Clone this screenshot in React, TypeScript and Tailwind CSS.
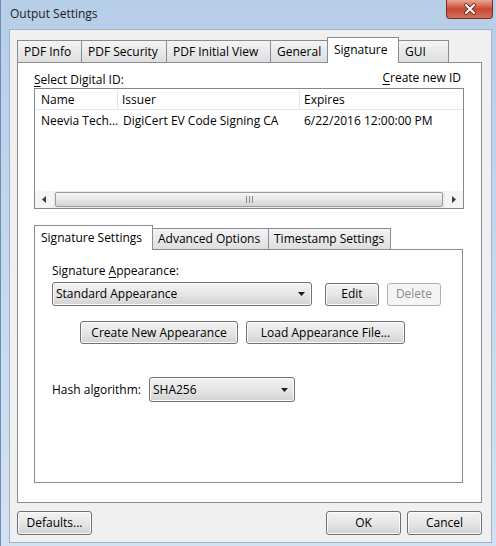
import type { ReactNode } from "react";

function Btn({
  children,
  className = "",
  disabled = false,
}: {
  children: ReactNode;
  className?: string;
  disabled?: boolean;
}) {
  return (
    <div
      className={`flex items-center justify-center rounded-[3px] border ${
        disabled
          ? "border-[#adb2b5] bg-[#f4f4f4] text-[#8d8d8d]"
          : "border-[#707070] bg-linear-to-b from-[#f3f3f3] from-0% via-[#e6e6e6] via-50% to-[#d2d2d2] to-100% text-black shadow-[inset_0_0_0_1px_#fbfbfb]"
      } ${className}`}
    >
      {children}
    </div>
  );
}

function Arrow() {
  return (
    <svg width="7" height="4" viewBox="0 0 7 4">
      <path d="M0 0 H7 L3.5 4 Z" fill="#1b1b1b" />
    </svg>
  );
}

function Combo({ value, className = "" }: { value: string; className?: string }) {
  return (
    <div
      className={`flex items-center justify-between rounded-[3px] border border-[#707070] bg-linear-to-b from-[#f3f3f3] from-0% via-[#e6e6e6] via-50% to-[#d2d2d2] to-100% pl-[3px] pr-[6px] shadow-[inset_0_0_0_1px_#fbfbfb] ${className}`}
    >
      <span>{value}</span>
      <Arrow />
    </div>
  );
}

export default function App() {
  const outerTabs = [
    { label: "PDF Info", w: "w-[65px]" },
    { label: "PDF Security", w: "w-[86px]" },
    { label: "PDF Initial View", w: "w-[105px]" },
    { label: "General", w: "w-[58px]" },
    { label: "Signature", w: "w-[72px]", active: true },
    { label: "GUI", w: "w-[51px]" },
  ];
  const innerTabs = [
    { label: "Signature Settings", w: "w-[119px]", active: true },
    { label: "Advanced Options", w: "w-[117px]" },
    { label: "Timestamp Settings", w: "w-[123px]" },
  ];

  return (
    <div className="flex h-[546px] w-[496px] flex-col border-l border-[#6f8db3] bg-linear-to-b from-[#b7cee8] to-[#d3e2f3] pr-[4px] pb-[3px] pl-[8px] font-['Open_Sans','Liberation_Sans',sans-serif] text-[12px] text-black">
      {/* title bar */}
      <div className="flex h-[29px] shrink-0 items-start justify-between">
        <span className="mt-[5px] pl-px text-[12px] text-[#1e1e1e]">Output Settings</span>
        <div className="mr-[-1px] flex h-[19px] w-[47px] items-center justify-center rounded-b-[4px] border border-t-0 border-[#7a2a1f] bg-linear-to-b from-[#e9a695] via-[#c8462f] to-[#d4705b]">
          <svg width="14" height="12" viewBox="0 0 14 12">
            <path d="M3 2 L11 10 M11 2 L3 10" stroke="#5a1a10" strokeWidth="3.6" strokeLinecap="round" />
            <path d="M3 2 L11 10 M11 2 L3 10" stroke="#ffffff" strokeWidth="2.2" strokeLinecap="round" />
          </svg>
        </div>
      </div>

      {/* client area */}
      <div className="flex flex-1 flex-col border border-[#9fb2ca] bg-[#f0f0f0] pt-[7px] pr-[9px] pl-[7px]">
        <div className="flex h-[25px] items-end">
          {outerTabs.map((t, i) =>
            t.active ? (
              <div
                key={t.label}
                className={`relative z-10 -mb-px -ml-px flex h-[26px] ${t.w} items-start border border-b-0 border-[#898c95] bg-white pt-[3px] pl-[6px]`}
              >
                {t.label}
              </div>
            ) : (
              <div
                key={t.label}
                className={`flex h-[22px] ${t.w} ${i > 0 ? "-ml-px" : ""} items-center border border-b-0 border-[#898c95] bg-linear-to-b from-[#f4f4f4] to-[#dedede] pl-[6px]`}
              >
                {t.label}
              </div>
            )
          )}
        </div>

        <div className="flex h-[441px] flex-col border border-[#898c95] bg-white pt-[6px] pr-[17px] pl-[16px]">
          <div className="flex h-[18px] items-start justify-between">
            <span className="pt-[2px]">
              <span className="underline underline-offset-2">S</span>elect Digital ID:
            </span>
            <span className="pr-[3px]">
              <span className="underline underline-offset-2">C</span>reate new ID
            </span>
          </div>

          {/* list */}
          <div className="mt-px flex h-[121px] flex-col border border-[#828790] bg-white">
            <div className="flex h-[21px] shrink-0 border-b border-[#e5e5e5] pt-px">
              <div className="flex w-[83px] items-center border-r border-[#e5e5e5] pl-[6px]">Name</div>
              <div className="flex w-[182px] items-center border-r border-[#e5e5e5] pl-[4px]">Issuer</div>
              <div className="flex flex-1 items-center pl-[4px]">Expires</div>
            </div>
            <div className="flex h-[21px] shrink-0 items-center whitespace-nowrap">
              <div className="w-[83px] overflow-hidden pl-[6px]">Neevia Tech...</div>
              <div className="w-[182px] overflow-hidden pl-[5px]">DigiCert EV Code Signing CA</div>
              <div className="flex-1 pl-[4px]">6/22/2016 12:00:00 PM</div>
            </div>
            <div className="flex-1" />
            <div className="flex h-[17px] shrink-0 items-center bg-[#ececec]">
              <div className="flex h-full w-[18px] items-center justify-center bg-[#f4f4f4]">
                <svg width="4" height="7" viewBox="0 0 4 7">
                  <path d="M4 0 V7 L0 3.5 Z" fill="#3a3a3a" />
                </svg>
              </div>
              <div className="mx-[2px] flex h-[15px] flex-1 items-center justify-center rounded-[2px] border border-[#9a9a9a] bg-linear-to-b from-[#f7f7f7] via-[#e6e6e6] to-[#d4d4d4]">
                <div className="flex gap-[2px]">
                  <div className="h-[7px] w-px bg-[#8a8a8a]" />
                  <div className="h-[7px] w-px bg-[#8a8a8a]" />
                  <div className="h-[7px] w-px bg-[#8a8a8a]" />
                </div>
              </div>
              <div className="flex h-full w-[18px] items-center justify-center bg-[#f4f4f4]">
                <svg width="4" height="7" viewBox="0 0 4 7">
                  <path d="M0 0 V7 L4 3.5 Z" fill="#3a3a3a" />
                </svg>
              </div>
            </div>
          </div>

          {/* inner tabs */}
          <div className="mt-[16px] flex h-[24px] items-end">
            {innerTabs.map((t, i) =>
              t.active ? (
                <div
                  key={t.label}
                  className={`relative z-10 -mb-px flex h-[25px] ${t.w} items-start border border-b-0 border-[#898c95] bg-white pt-[3px] pl-[6px]`}
                >
                  {t.label}
                </div>
              ) : (
                <div
                  key={t.label}
                  className={`flex h-[21px] ${t.w} ${i > 0 ? "-ml-px" : ""} items-center border border-b-0 border-[#898c95] bg-linear-to-b from-[#f4f4f4] to-[#dedede] pl-[5px]`}
                >
                  {t.label}
                </div>
              )
            )}
          </div>
          <div className="mr-px flex h-[234px] flex-col border border-[#898c95] bg-white pt-[13px] pl-[17px]">
            <span className="leading-[16px]">
              Signature <span className="underline underline-offset-2">A</span>ppearance:
            </span>
            <div className="mt-[3px] flex items-center">
              <Combo value="Standard Appearance" className="h-[24px] w-[260px]" />
              <Btn className="ml-[13px] h-[23px] w-[54px]">Edit</Btn>
              <Btn disabled className="ml-[8px] h-[23px] w-[54px]">
                Delete
              </Btn>
            </div>
            <div className="mt-[15px] ml-[28px] flex gap-[8px]">
              <Btn className="h-[23px] w-[158px]">Create New Appearance</Btn>
              <Btn className="h-[23px] w-[159px]">Load Appearance File...</Btn>
            </div>
            <div className="mt-[33px] flex items-center">
              <span>Hash algorithm:</span>
              <Combo value="SHA256" className="ml-[8px] h-[25px] w-[146px]" />
            </div>
          </div>
        </div>

        {/* bottom buttons */}
        <div className="mt-[8px] flex items-center">
          <Btn className="h-[24px] w-[75px]">Defaults...</Btn>
          <div className="flex-1" />
          <Btn className="h-[24px] w-[75px]">OK</Btn>
          <Btn className="ml-[6px] h-[24px] w-[75px]">Cancel</Btn>
        </div>
      </div>
    </div>
  );
}
